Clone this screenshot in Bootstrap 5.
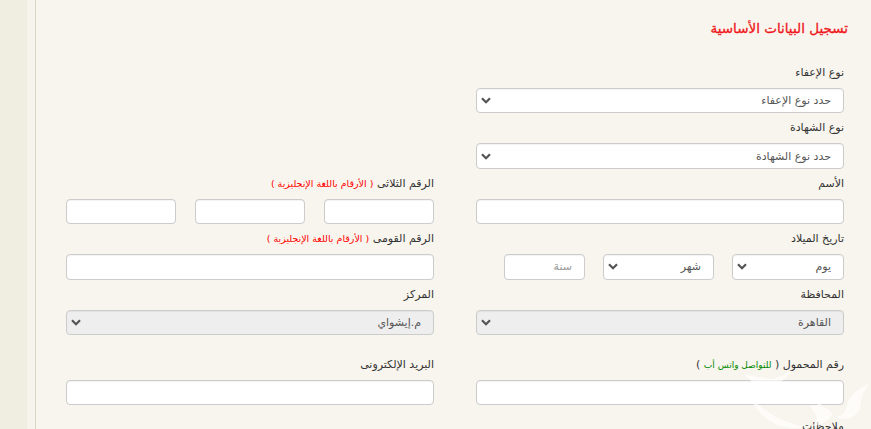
<!DOCTYPE html>
<html lang="ar" dir="rtl">
<head>
<meta charset="utf-8">
<title>تسجيل البيانات الأساسية</title>
<link rel="stylesheet" href="https://cdn.jsdelivr.net/npm/bootstrap@5.3.0/dist/css/bootstrap.min.css">
<style>
html,body{height:429px;overflow:hidden}
body{background:#f8f5ee;font-family:"DejaVu Sans","Noto Sans",sans-serif;font-size:11px;color:#333}
.page-shell{display:flex;height:429px;overflow:hidden;position:relative}
.side-strip{width:27px;flex:none;background:#f0eee1}
.side-gap{width:9px;flex:none;background:#f6f4ed;border-right:1px solid #d8d5c7}
.main-area{flex:1;padding:0 6px 0 9px;min-width:0}
.page-title{color:#f01820;font-size:13.5px;font-weight:400;-webkit-text-stroke:.3px #f01820;line-height:20px;margin:18px 17px 0 0;height:45px}
.reg-row{margin:0;display:grid;grid-template-columns:1fr 1fr}
.reg-col{padding:0 21px}
.field{height:55.4px}
.field-tall{height:70px}
.field-phone{height:62px}
.field-spacer{height:110.8px}
.reg-label{display:block;text-align:right;height:20px;line-height:20px;margin:0 0 5px;font-size:11px;color:#333;white-space:nowrap}
.hint-red{color:#f00;font-size:9.5px}
.hint-green{color:#080;font-size:9px}
.reg-ctl{height:25.4px;min-height:0;padding:0 12px;font-size:11px;line-height:23px;color:#555;border:1px solid #ccc;border-radius:4px;background-color:#fff;box-shadow:inset 0 1px 1px rgba(0,0,0,.05)}
select.reg-ctl{padding:0 12px 0 24px;background-position:left 4px center;background-size:10px 7px;background-image:url("data:image/svg+xml,%3csvg xmlns='http://www.w3.org/2000/svg' viewBox='0 0 10 7'%3e%3cpath fill='none' stroke='%23555' stroke-width='2.2' d='M1 1.2l4 4 4-4'/%3e%3c/svg%3e")}
.reg-ctl:disabled{background-color:#eee;color:#555;opacity:1}
.tri-inputs{display:grid;grid-template-columns:repeat(3,1fr);gap:19px}
.date-inputs{display:flex;gap:18px}
.date-day{width:112px;flex:none}
.date-month{width:111px;flex:none}
.date-year{width:81px;flex:none}
.reg-ctl::placeholder{color:#999}
.water-mark{position:absolute;left:742px;top:370px;width:129px;height:59px;pointer-events:none}
</style>
</head>
<body>
<div class="page-shell" dir="ltr">
  <div class="side-strip"></div>
  <div class="side-gap"></div>
  <div class="main-area" dir="rtl">
    <h1 class="page-title">تسجيل البيانات الأساسية</h1>
    <div class="reg-row">
      <div class="reg-col">
        <div class="field"><label class="reg-label">نوع الإعفاء</label><select class="form-select reg-ctl"><option>حدد نوع الإعفاء</option></select></div>
        <div class="field"><label class="reg-label">نوع الشهادة</label><select class="form-select reg-ctl"><option>حدد نوع الشهادة</option></select></div>
        <div class="field"><label class="reg-label">الأسم</label><input class="form-control reg-ctl"></div>
        <div class="field"><label class="reg-label">تاريخ الميلاد</label>
          <div class="date-inputs">
            <select class="form-select reg-ctl date-day"><option>يوم</option></select>
            <select class="form-select reg-ctl date-month"><option>شهر</option></select>
            <input class="form-control reg-ctl date-year" placeholder="سنة">
          </div>
        </div>
        <div class="field field-tall"><label class="reg-label">المحافظة</label><select class="form-select reg-ctl" disabled><option>القاهرة</option></select></div>
        <div class="field field-phone"><label class="reg-label">رقم المحمول <span>( <span class="hint-green">للتواصل واتس أب</span> )</span></label><input class="form-control reg-ctl"></div>
        <div class="field"><label class="reg-label">ملاحظات</label></div>
      </div>
      <div class="reg-col">
        <div class="field-spacer"></div>
        <div class="field"><label class="reg-label">الرقم الثلاثى <span class="hint-red">( الأرقام باللغة الإنجليزية )</span></label>
          <div class="tri-inputs"><input class="form-control reg-ctl"><input class="form-control reg-ctl"><input class="form-control reg-ctl"></div>
        </div>
        <div class="field"><label class="reg-label">الرقم القومى <span class="hint-red">( الأرقام باللغة الإنجليزية )</span></label><input class="form-control reg-ctl"></div>
        <div class="field field-tall"><label class="reg-label">المركز</label><select class="form-select reg-ctl" disabled><option>م.إيشواي</option></select></div>
        <div class="field"><label class="reg-label">البريد الإلكترونى</label><input class="form-control reg-ctl"></div>
      </div>
    </div>
  </div>
  <svg class="water-mark" viewBox="0 0 129 59" aria-hidden="true"><g fill="#fff" fill-opacity=".65"><path d="M2 4c9 3 20 3 28 5 8-2 14-5 20-9-4 7-10 12-18 15 8 6 18 8 30 8 10 0 16 6 18 14-8-5-16-7-26-6-18 2-36-10-52-27z"/><path d="M8 26c12 14 30 26 54 31-8 2-20 2-30-4C20 47 12 38 8 26z"/><path d="M68 36c10-2 20 2 22 8-2 6-10 11-22 13 6-4 8-8 6-12-2-3-4-6-6-9z"/><path d="M92 46c8 2 12-4 14-14 2-6 10-14 21-18-4 6-8 12-8 18 0 12-12 22-27 14z"/></g></svg>
</div>
</body>
</html>
